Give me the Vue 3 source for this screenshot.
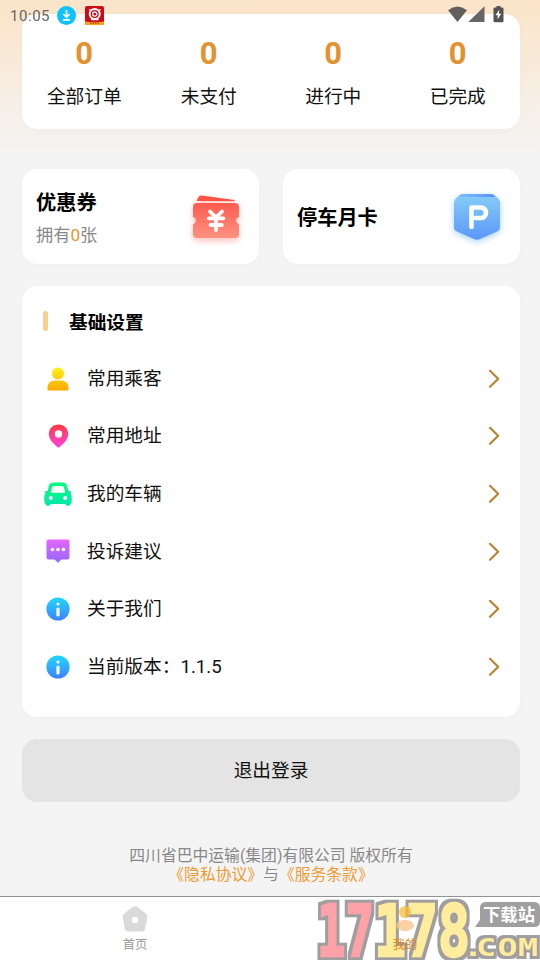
<script setup>
const stats = ['全部订单', '未支付', '进行中', '已完成']
const rows = [
  { icon: 'user', label: '常用乘客' },
  { icon: 'pin', label: '常用地址' },
  { icon: 'car', label: '我的车辆' },
  { icon: 'chat', label: '投诉建议' },
  { icon: 'info', label: '关于我们' },
  { icon: 'info', label: '当前版本：1.1.5' },
]
</script>

<template>
  <div class="screen">
    <svg class="defs" width="0" height="0">
      <defs>
        <linearGradient id="g-user" x1="0" y1="3" x2="0" y2="27" gradientUnits="userSpaceOnUse"><stop stop-color="#fff319" /><stop offset="1" stop-color="#ffa600" /></linearGradient>
        <linearGradient id="g-pin" x1="0" y1="0" x2="0" y2="1"><stop stop-color="#ff3a3f" /><stop offset="1" stop-color="#ff42df" /></linearGradient>
        <linearGradient id="g-car" x1="0" y1="0" x2="0" y2="1"><stop stop-color="#00ff7d" /><stop offset="1" stop-color="#08e5aa" /></linearGradient>
        <linearGradient id="g-chat" x1="0" y1="0" x2="0" y2="1"><stop stop-color="#e466ff" /><stop offset="1" stop-color="#9568ff" /></linearGradient>
        <linearGradient id="g-info" x1="0" y1="0" x2="0" y2="1"><stop stop-color="#22d8ff" /><stop offset="1" stop-color="#3b82ff" /></linearGradient>
        <linearGradient id="g-coupon" x1="0" y1="0" x2="0" y2="1"><stop stop-color="#ff5c50" /><stop offset="1" stop-color="#ff9180" /></linearGradient>
        <linearGradient id="g-park" x1="0" y1="0" x2="0" y2="1"><stop stop-color="#83caf7" /><stop offset="1" stop-color="#5b97fa" /></linearGradient>
        <linearGradient id="g-parktop" x1="0" y1="0" x2="1" y2="0"><stop stop-color="#7fc3fa" /><stop offset="1" stop-color="#558bff" /></linearGradient>
        <filter id="f-edge" x="-10%" y="-10%" width="120%" height="120%" color-interpolation-filters="sRGB">
          <feMorphology in="SourceAlpha" operator="dilate" radius="3" result="d" />
          <feFlood flood-color="#a09e9e" />
          <feComposite in2="d" operator="in" result="o" />
          <feMerge><feMergeNode in="o" /><feMergeNode in="SourceGraphic" /></feMerge>
        </filter>
      </defs>
    </svg>

    <div class="status">
      <span class="time">10:05</span>
      <svg class="dl" width="19" height="19" viewBox="0 0 19 19">
        <circle cx="9.5" cy="9.5" r="9.5" fill="#0cc3fb" />
        <path d="M9.500 4v6.500M6.300 8l3.200 3.200L12.700 8M6 13.900h7" fill="none" stroke="#fff" stroke-width="1.700" />
      </svg>
      <svg class="app" width="19" height="19" viewBox="0 0 19 19">
        <rect width="19" height="19" rx="2" fill="#cf0a16" />
        <path d="M0 15.500Q9.500 17 19 15.500V17q0 2-2 2H2q-2 0-2-2z" fill="#f5a31a" />
        <path d="M5 17.300h10" stroke="#b85912" stroke-width="1.500" stroke-dasharray="1.500 1" />
        <circle cx="9.700" cy="8" r="5" fill="none" stroke="#fff" stroke-width="2" />
        <circle cx="9.700" cy="8" r="2.100" fill="none" stroke="#fff" stroke-width="1.200" />
        <path d="M4 3.500l2 1M15.500 3.500l-2 1M6 13.500h7.500" stroke="#fff" stroke-width="1.300" />
      </svg>
      <span class="grow"></span>
      <svg class="sys" width="58" height="18" viewBox="0 0 58 18">
        <path d="M0 4.200Q9.500-3 19 4.200L9.500 16z" fill="#625f5a" />
        <path d="M36.500.3V16H20.300z" fill="#666" />
        <path d="M48.500 0h4v1.500h1.600q1.400 0 1.400 1.400v12q0 1.400-1.400 1.400h-7.200q-1.400 0-1.400-1.400v-12q0-1.400 1.400-1.400h1.600z" fill="#555350" />
        <path d="M51.300 3.700l-3.800 5.500h2.400l-.5 4.200 3.900-5.600h-2.400z" fill="#fff" />
      </svg>
    </div>

    <main class="content">
      <section class="card stats">
        <div v-for="s in stats" :key="s" class="stat"><b>0</b><span>{{ s }}</span></div>
      </section>

      <section class="tiles">
        <div class="card tile">
          <div>
            <h3>优惠券</h3>
            <p>拥有<em>0</em>张</p>
          </div>
          <svg class="coupon" width="48" height="46" viewBox="0 0 48 46">
            <path d="M4.500 6L6.500 2Q7.500.4 9.500.6L41 4.700Q43 5 43 6.200z" fill="#ff5145" />
            <path d="M5 8h38q4 0 4 4v10a3.700 3.700 0 0 0 0 7.200V39q0 4-4 4H5q-4 0-4-4v-9.800a3.700 3.700 0 0 0 0-7.200V12q0-4 4-4z" fill="url(#g-coupon)" />
            <path d="M18 16.500l6 6 6-6M16.800 23.300h14.600M18.500 30h11.300M24 23v12" fill="none" stroke="#fff" stroke-width="3.800" stroke-linecap="round" stroke-linejoin="round" />
          </svg>
        </div>
        <div class="card tile">
          <h3>停车月卡</h3>
          <svg class="park" width="48" height="46" viewBox="0 0 48 46">
            <path d="M9 0h29q2 0 3.200 1.200L46 6H2L6 1.500Q7 0 9 0z" fill="url(#g-parktop)" />
            <path d="M5 3h38q1 0 2 1.500 2 2 2 4.500v24q0 3-3 4.500L27 45q-3 1.300-6 0L4 37.500Q1 36 1 33V9Q1 6.500 3 4.500z" fill="url(#g-park)" />
            <path d="M18.500 33V13.500h10a5.300 5.300 0 0 1 0 10.500h-6" fill="none" stroke="#fff" stroke-width="4.600" stroke-linecap="round" stroke-linejoin="round" />
          </svg>
        </div>
      </section>

      <section class="card list">
        <header><i></i><h2>基础设置</h2></header>
        <div v-for="r in rows" :key="r.label" class="row">
          <svg class="ico" width="30" height="30" viewBox="0 0 30 30">
            <g v-if="r.icon === 'user'" fill="url(#g-user)">
              <circle cx="15" cy="9.500" r="6" />
              <path d="M4.500 24.200q0-7.700 7.700-7.700h5.600q7.700 0 7.700 7.700v1.300q0 1-1 1h-19q-1 0-1-1z" />
            </g>
            <path v-else-if="r.icon === 'pin'" fill="url(#g-pin)" fill-rule="evenodd" d="M15.500 3.500c5.500 0 9.700 4 9.700 9.500 0 5-3.500 8.500-8.500 13q-1.200 1-2.400 0C9.200 21.500 5.900 18 5.900 13c0-5.500 4-9.500 9.600-9.500zM15.500 9.300a3.700 3.700 0 1 0 0 7.400 3.700 3.700 0 0 0 0-7.400z" />
            <path v-else-if="r.icon === 'car'" fill="url(#g-car)" fill-rule="evenodd" d="M10.500 3.500h9q3.500 0 4.400 3l1.500 5.600 2-.1q.9 0 .6 1l-.5 1.200q1.200 1.400 1.200 3.600v5q0 1.500-1.300 2.200v.3q-.5 1.500-1.700 1.500h-1.500q-1.200 0-2-1.700H7.800q-.8 1.700-2 1.700H4.300q-1.200 0-1.700-1.500V25q-1.300-.7-1.300-2.200v-5q0-2.200 1.200-3.600L2 13q-.3-1 .6-1l2 .1L6.100 6.500q.9-3 4.400-3zM11 7q-1.600 0-2 1.500L7.800 13.800h14.400L21 8.500Q20.600 7 19 7zM7.800 16.900a2 2 0 1 0 0 4 2 2 0 0 0 0-4zM22.200 16.900a2 2 0 1 0 0 4 2 2 0 0 0 0-4z" />
            <g v-else-if="r.icon === 'chat'">
              <path fill="url(#g-chat)" d="M5.500 3.500h19q2 0 2 2v16q0 2-2 2h-6L15 26.800l-3.500-3.300h-6q-2 0-2-2v-16q0-2 2-2z" />
              <g fill="#fff"><circle cx="9.500" cy="13.500" r="1.800" /><circle cx="15" cy="13.500" r="1.800" /><circle cx="20.500" cy="13.500" r="1.800" /></g>
            </g>
            <g v-else>
              <circle cx="15" cy="15" r="11.600" fill="url(#g-info)" />
              <circle cx="15" cy="10" r="1.600" fill="#fff" />
              <path d="M15 15v6" stroke="#fff" stroke-width="3.200" stroke-linecap="round" />
            </g>
          </svg>
          <span>{{ r.label }}</span>
          <svg width="12" height="20" viewBox="0 0 12 20"><path d="M2 1.800l8.200 8L2 17.800" fill="none" stroke="#b58531" stroke-width="2.200" stroke-linecap="round" stroke-linejoin="round" /></svg>
        </div>
      </section>

      <button class="logout">退出登录</button>

      <footer>
        <div>四川省巴中运输(集团)有限公司 版权所有</div>
        <div><a>《隐私协议》</a>与<a>《服务条款》</a></div>
      </footer>
    </main>

    <nav>
      <svg class="mark" width="230" height="63" viewBox="310 897 230 63">
        <g class="digits">
          <text x="317" y="956" textLength="57" lengthAdjust="spacingAndGlyphs" fill="#fea2a9" stroke="#fea2a9" filter="url(#f-edge)">17</text>
          <text x="374" y="956" textLength="96" lengthAdjust="spacingAndGlyphs" fill="#ffec9d" stroke="#ffec9d" filter="url(#f-edge)">178</text>
        </g>
        <path d="M486 902h48q6 0 6 6v13q0 6-6 6H475l5-7v-12q0-6 6-6z" fill="#9f9f9f" />
        <text class="tag" x="483" y="921" textLength="52" lengthAdjust="spacingAndGlyphs">下载站</text>
        <g filter="url(#f-edge)">
          <text class="com" transform="scale(1.400 1)" x="330.700 340 355.400 370" y="956">.COM</text>
        </g>
      </svg>
      <div class="tab">
        <svg width="30" height="28" viewBox="0 0 30 28">
          <path d="M12.700 2q2.300-1.500 4.600 0l8.500 6.500q2 1.500 1.500 4l-2 11q-.5 3-3.500 3H8.200q-3 0-3.500-3l-2-11q-.5-2.500 1.500-4z" fill="#dadada" />
          <circle cx="15" cy="15" r="3.200" fill="#fff" />
        </svg>
        <span>首页</span>
      </div>
      <div class="tab active">
        <svg width="30" height="28" viewBox="0 0 30 28">
          <circle cx="15" cy="7" r="6" fill="#f8bc35" />
          <ellipse cx="15" cy="20.500" rx="9" ry="5.700" fill="#fac389" />
        </svg>
        <span>我的</span>
      </div>
    </nav>
  </div>
</template>

<style>
body { margin: 0; }
</style>

<style scoped>
.screen {
  position: relative;
  width: 540px;
  height: 960px;
  overflow: hidden;
  display: flex;
  flex-direction: column;
  box-sizing: border-box;
  background: linear-gradient(#fbe4c8 0, #f4f4f4 155px);
  font-family: Roboto, "Noto Sans CJK SC", sans-serif;
  font-size: 18.700px;
  color: #111;
}
.defs { position: absolute; }
.status {
  position: absolute;
  inset: 0 0 auto 0;
  height: 31px;
  padding: 0 34px 0 10px;
  display: flex;
  align-items: center;
  z-index: 2;
}
.time { font-size: 15px; letter-spacing: .55px; color: #68645f; width: 47px; }
.app { margin-left: 9px; }
.sys { margin-top: -1px; }
.grow { flex: 1; }
.content { flex: 1; padding: 14px 20px 0 22px; }
.card { background: #fff; border-radius: 15px; box-shadow: 0 2px 8px rgba(0, 0, 0, .02); }
.stats { height: 115px; display: grid; grid-template-columns: repeat(4, 1fr); }
.stat { display: flex; flex-direction: column; align-items: center; }
.stat b { margin-top: 21px; font-size: 31px; line-height: 38px; color: #e49230; }
.stat span { margin-top: 10px; line-height: 28px; }
.tiles { display: grid; grid-template-columns: 1fr 1fr; gap: 24px; margin-top: 40px; }
.tile { height: 95px; box-sizing: border-box; padding: 0 19px 0 14px; display: flex; align-items: center; justify-content: space-between; }
.tile h3 { margin: 2px 0 0; font-size: 20.200px; line-height: 30px; font-weight: 700; color: #000; }
.tile p { margin: 4px 0 0; font-size: 17.200px; line-height: 26px; color: #888; }
.tile em { font-style: normal; color: #e8942f; }
.coupon, .park { overflow: visible; margin-top: 2px; }
.coupon { filter: drop-shadow(0 3px 3px rgba(255, 100, 85, .4)); }
.park { margin-top: 0; filter: drop-shadow(0 2px 3px rgba(80, 165, 255, .5)); }
.list { height: 431px; box-sizing: border-box; margin-top: 22px; padding: 8px 20px 0 21px; }
.list header { height: 56px; display: flex; align-items: center; }
.list i { width: 5px; height: 20px; border-radius: 3px; background: #f8ce91; margin-top: -2px; }
.list h2 { margin: 2px 0 0 21px; font-size: 18.700px; line-height: 28px; color: #000; }
.row { height: 57.600px; display: flex; align-items: center; }
.row span { flex: 1; margin-left: 14.500px; line-height: 28px; }
.ico { margin: -.5px 0 0 -.5px; }
.logout {
  display: block;
  width: 100%;
  height: 63px;
  margin-top: 22px;
  padding: 0 0 4px;
  border: 0;
  border-radius: 15px;
  background: #e4e4e4;
  font: inherit;
  color: #111;
}
footer { margin-top: 44px; text-align: center; font-size: 15.800px; line-height: 19px; color: #888; }
footer a { color: #ee9a35; }
nav {
  position: relative;
  height: 64px;
  box-sizing: border-box;
  border-top: 1px solid #929292;
  background: #fff;
  display: grid;
  grid-template-columns: 1fr 1fr;
}
.tab { position: relative; display: flex; flex-direction: column; align-items: center; padding-top: 8px; font-size: 12.300px; line-height: 18px; color: #999; }
.tab span { margin-top: 3px; }
.active { color: #db8420; }
.active svg { opacity: .75; }
.mark { position: absolute; right: 0; top: 0; }
.digits { font: bold 71px "DejaVu Sans Mono", monospace; stroke-width: 2.500px; }
.com { font: bold 24px "DejaVu Sans Mono", monospace; fill: #ffec9d; }
.tag { font: bold 17px "Noto Sans CJK SC", sans-serif; fill: #fff; }
</style>
